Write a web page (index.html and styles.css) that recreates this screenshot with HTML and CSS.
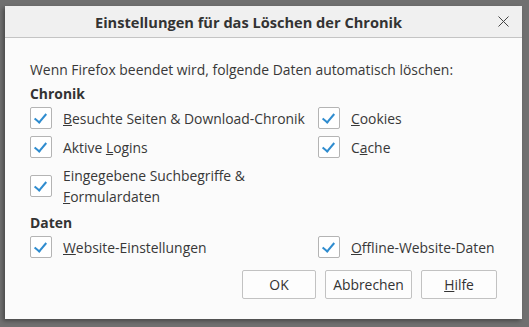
FILE: index.html
```html
<!DOCTYPE html>
<html lang="de">
<head>
  <meta charset="UTF-8"/>
  <title>Einstellungen für das Löschen der Chronik</title>
  <link rel="stylesheet" href="styles.css">
</head>
<body>
  <div class="dialog">
    <div class="titlebar">
      <span class="title">Einstellungen für das Löschen der Chronik</span>
      <button class="close-btn" aria-label="Schließen">
        <svg width="11" height="11" viewBox="0 0 11 11"><path d="M0.5 0.5L10.5 10.5M10.5 0.5L0.5 10.5" stroke="#444" stroke-width="1"/></svg>
      </button>
    </div>

    <div class="content">
      <p class="intro">Wenn Firefox beendet wird, folgende Daten automatisch löschen:</p>

      <h3>Chronik</h3>
      <div class="options">
        <label class="opt"><span class="box checked"></span><span><u>B</u>esuchte Seiten &amp; Download-Chronik</span></label>
        <label class="opt"><span class="box checked"></span><span><u>C</u>ookies</span></label>
        <label class="opt"><span class="box checked"></span><span>Aktive <u>L</u>ogins</span></label>
        <label class="opt"><span class="box checked"></span><span>C<u>a</u>che</span></label>
        <label class="opt"><span class="box checked"></span><span>Eingegebene Suchbegriffe &amp;<br><u>F</u>ormulardaten</span></label>
      </div>

      <h3 class="second">Daten</h3>
      <div class="options">
        <label class="opt"><span class="box checked"></span><span><u>W</u>ebsite-Einstellungen</span></label>
        <label class="opt"><span class="box checked"></span><span><u>O</u>ffline-Website-Daten</span></label>
      </div>

      <div class="buttons">
        <button class="btn ok">OK</button>
        <button class="btn">Abbrechen</button>
        <button class="btn"><u>H</u>ilfe</button>
      </div>
    </div>
  </div>
</body>
</html>
```

FILE: styles.css
```css
* { margin:0; padding:0; box-sizing:border-box; }
body {
  width:529px; height:327px; overflow:hidden;
  background:#707070;
  padding:6px 7px 8px 5px;
  font-family:'Open Sans','Noto Sans',sans-serif;
  font-size:13.9px; color:#383838;
}
.dialog {
  width:517px; height:313px;
  background:#fbfbfb;
  box-shadow:-2px 2px 4px rgba(0,0,0,0.35);
  display:flex; flex-direction:column;
}
.titlebar {
  height:32px; flex:none;
  background:#f0f0f0; border-bottom:1px solid #c4c4c4;
  display:flex; align-items:center; justify-content:center;
  position:relative;
}
.title { font-weight:bold; font-size:14.6px; color:#333; margin-left:-30px; }
.close-btn {
  position:absolute; right:13px; top:10px;
  background:none; border:none; width:11px; height:11px;
}
.close-btn svg { display:block; }
.content { padding:23px 25px 0 25px; flex:1; display:flex; flex-direction:column; }
.intro { line-height:18px; }
h3 { font-size:13.9px; font-weight:bold; line-height:18px; margin-top:6px; color:#333; }
h3.second { margin-top:7px; }
.options {
  display:grid; grid-template-columns:288px 1fr;
  row-gap:7px; margin-top:4px;
}
.opt { display:flex; align-items:center; gap:11px; line-height:21px; }
.box {
  flex:none; width:22px; height:22px;
  background:#fff; border:1px solid #b4b4b4; border-radius:2px;
  position:relative;
}
.box.checked::after {
  content:""; position:absolute; left:6px; top:3px;
  width:5px; height:10px;
  border-right:2px solid #2f8ccf; border-bottom:2px solid #2f8ccf;
  transform:rotate(40deg);
}
u { text-decoration:underline; text-underline-offset:1px; }
.buttons {
  display:flex; justify-content:flex-end; gap:9px;
  margin-top:auto; margin-bottom:20px;
}
.btn {
  height:29px; background:#fdfdfd;
  border:1px solid #c2c2c2; border-radius:2px;
  font-family:inherit; font-size:13.9px; color:#333;
}
.btn.ok { width:74px; }
.btn:nth-child(2) { width:87px; }
.btn:nth-child(3) { width:76px; }
```
